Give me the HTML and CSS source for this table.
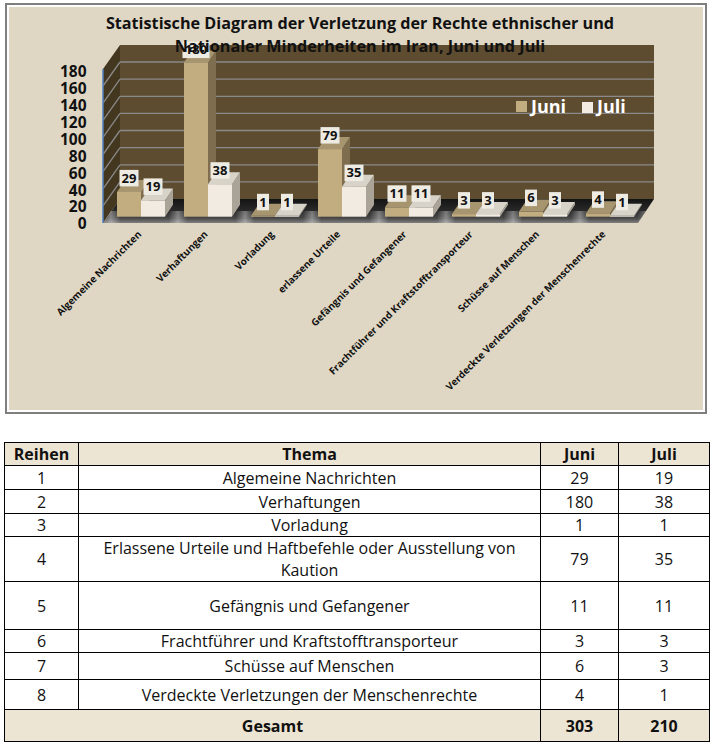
FILE: index.html
```html
<!DOCTYPE html>
<html lang="de">
<head>
<meta charset="utf-8">
<title>Statistische Diagram der Verletzung der Rechte ethnischer und Nationaler Minderheiten im Iran</title>
<link rel="stylesheet" href="styles.css">
</head>
<body>
<div class="chart-frame">
<svg class="chart" width="694" height="403" viewBox="9 7 694 403" xmlns="http://www.w3.org/2000/svg">
  <defs>
    <linearGradient id="floorShade" x1="0" y1="0" x2="0" y2="1">
      <stop offset="0" stop-color="#141414"/>
      <stop offset="0.5" stop-color="#2a2a2a"/>
      <stop offset="0.8" stop-color="#484848"/>
      <stop offset="1" stop-color="#808080"/>
    </linearGradient>
    <linearGradient id="floorGlow" gradientUnits="userSpaceOnUse" x1="144.5" y1="0" x2="211.5" y2="0" spreadMethod="repeat">
      <stop offset="0" stop-color="#ffffff" stop-opacity="0"/>
      <stop offset="0.36" stop-color="#ffffff" stop-opacity="0"/>
      <stop offset="0.5" stop-color="#ffffff" stop-opacity="0.36"/>
      <stop offset="0.64" stop-color="#ffffff" stop-opacity="0"/>
      <stop offset="1" stop-color="#ffffff" stop-opacity="0"/>
    </linearGradient>
  </defs>

  <polygon class="wall-side" points="103,69 120,45 120,199 103,223"/>
  <rect class="wall-back" x="120" y="45" width="534" height="154"/>

  <g class="grid">
    <line x1="120" y1="181.9" x2="654" y2="181.9"/>
    <line x1="120" y1="164.8" x2="654" y2="164.8"/>
    <line x1="120" y1="147.6" x2="654" y2="147.6"/>
    <line x1="120" y1="130.5" x2="654" y2="130.5"/>
    <line x1="120" y1="113.4" x2="654" y2="113.4"/>
    <line x1="120" y1="96.3" x2="654" y2="96.3"/>
    <line x1="120" y1="79.2" x2="654" y2="79.2"/>
    <line x1="120" y1="62" x2="654" y2="62"/>
    <line x1="103" y1="205.9" x2="120" y2="181.9"/>
    <line x1="103" y1="188.8" x2="120" y2="164.8"/>
    <line x1="103" y1="171.6" x2="120" y2="147.6"/>
    <line x1="103" y1="154.5" x2="120" y2="130.5"/>
    <line x1="103" y1="137.4" x2="120" y2="113.4"/>
    <line x1="103" y1="120.3" x2="120" y2="96.3"/>
    <line x1="103" y1="103.2" x2="120" y2="79.2"/>
    <line x1="103" y1="86" x2="120" y2="62"/>
  </g>

  <polygon class="floor" points="103,223 120,199 654,199 638,223"/>
  <polygon class="floor-glow" points="103,223 111,211 646,211 638,223"/>
  <line class="axis" x1="103" y1="69" x2="103" y2="223"/>

  <g class="bars">
    <polygon class="juni-side" points="141,191.9 149,179.9 149,204.7 141,216.7"/>
    <polygon class="juni-top" points="117,191.9 125,179.9 149,179.9 141,191.9"/>
    <rect class="juni-front" x="117" y="191.9" width="24" height="24.8"/>
    <polygon class="juli-side" points="165,200.4 173,188.4 173,204.7 165,216.7"/>
    <polygon class="juli-top" points="141,200.4 149,188.4 173,188.4 165,200.4"/>
    <rect class="juli-front" x="141" y="200.4" width="24" height="16.3"/>

    <polygon class="juni-side" points="208,62.6 216,50.6 216,204.7 208,216.7"/>
    <polygon class="juni-top" points="184,62.6 192,50.6 216,50.6 208,62.6"/>
    <rect class="juni-front" x="184" y="62.6" width="24" height="154.1"/>
    <polygon class="juli-side" points="232,184.2 240,172.2 240,204.7 232,216.7"/>
    <polygon class="juli-top" points="208,184.2 216,172.2 240,172.2 232,184.2"/>
    <rect class="juli-front" x="208" y="184.2" width="24" height="32.5"/>

    <polygon class="juni-side" points="275,215.8 283,203.8 283,204.7 275,216.7"/>
    <polygon class="juni-top" points="251,215.8 259,203.8 283,203.8 275,215.8"/>
    <rect class="juni-front" x="251" y="215.8" width="24" height="0.9"/>
    <polygon class="juli-side" points="299,215.8 307,203.8 307,204.7 299,216.7"/>
    <polygon class="juli-top" points="275,215.8 283,203.8 307,203.8 299,215.8"/>
    <rect class="juli-front" x="275" y="215.8" width="24" height="0.9"/>

    <polygon class="juni-side" points="342,149.1 350,137.1 350,204.7 342,216.7"/>
    <polygon class="juni-top" points="318,149.1 326,137.1 350,137.1 342,149.1"/>
    <rect class="juni-front" x="318" y="149.1" width="24" height="67.6"/>
    <polygon class="juli-side" points="366,186.7 374,174.7 374,204.7 366,216.7"/>
    <polygon class="juli-top" points="342,186.7 350,174.7 374,174.7 366,186.7"/>
    <rect class="juli-front" x="342" y="186.7" width="24" height="30"/>

    <polygon class="juni-side" points="409,207.3 417,195.3 417,204.7 409,216.7"/>
    <polygon class="juni-top" points="385,207.3 393,195.3 417,195.3 409,207.3"/>
    <rect class="juni-front" x="385" y="207.3" width="24" height="9.4"/>
    <polygon class="juli-side" points="433,207.3 441,195.3 441,204.7 433,216.7"/>
    <polygon class="juli-top" points="409,207.3 417,195.3 441,195.3 433,207.3"/>
    <rect class="juli-front" x="409" y="207.3" width="24" height="9.4"/>

    <polygon class="juni-side" points="476,214.1 484,202.1 484,204.7 476,216.7"/>
    <polygon class="juni-top" points="452,214.1 460,202.1 484,202.1 476,214.1"/>
    <rect class="juni-front" x="452" y="214.1" width="24" height="2.6"/>
    <polygon class="juli-side" points="500,214.1 508,202.1 508,204.7 500,216.7"/>
    <polygon class="juli-top" points="476,214.1 484,202.1 508,202.1 500,214.1"/>
    <rect class="juli-front" x="476" y="214.1" width="24" height="2.6"/>

    <polygon class="juni-side" points="543,211.6 551,199.6 551,204.7 543,216.7"/>
    <polygon class="juni-top" points="519,211.6 527,199.6 551,199.6 543,211.6"/>
    <rect class="juni-front" x="519" y="211.6" width="24" height="5.1"/>
    <polygon class="juli-side" points="567,214.1 575,202.1 575,204.7 567,216.7"/>
    <polygon class="juli-top" points="543,214.1 551,202.1 575,202.1 567,214.1"/>
    <rect class="juli-front" x="543" y="214.1" width="24" height="2.6"/>

    <polygon class="juni-side" points="610,213.3 618,201.3 618,204.7 610,216.7"/>
    <polygon class="juni-top" points="586,213.3 594,201.3 618,201.3 610,213.3"/>
    <rect class="juni-front" x="586" y="213.3" width="24" height="3.4"/>
    <polygon class="juli-side" points="634,215.8 642,203.8 642,204.7 634,216.7"/>
    <polygon class="juli-top" points="610,215.8 618,203.8 642,203.8 634,215.8"/>
    <rect class="juli-front" x="610" y="215.8" width="24" height="0.9"/>
  </g>

  <g class="dlabels">
    <rect x="119.5" y="169.9" width="19" height="16.5"/><text x="129" y="182.6">29</text>
    <rect x="143.5" y="178.4" width="19" height="16.5"/><text x="153" y="191.1">19</text>
    <rect x="182.5" y="41.6" width="27" height="16.5"/><text x="196" y="54.3">180</text>
    <rect x="210.5" y="162.2" width="19" height="16.5"/><text x="220" y="174.9">38</text>
    <rect x="257" y="193.8" width="12" height="16.5"/><text x="263" y="206.5">1</text>
    <rect x="281" y="193.8" width="12" height="16.5"/><text x="287" y="206.5">1</text>
    <rect x="320.5" y="127.1" width="19" height="16.5"/><text x="330" y="139.8">79</text>
    <rect x="344.5" y="164.7" width="19" height="16.5"/><text x="354" y="177.4">35</text>
    <rect x="387.5" y="185.3" width="19" height="16.5"/><text x="397" y="198">11</text>
    <rect x="411.5" y="185.3" width="19" height="16.5"/><text x="421" y="198">11</text>
    <rect x="458" y="192.1" width="12" height="16.5"/><text x="464" y="204.8">3</text>
    <rect x="482" y="192.1" width="12" height="16.5"/><text x="488" y="204.8">3</text>
    <rect x="525" y="189.6" width="12" height="16.5"/><text x="531" y="202.3">6</text>
    <rect x="549" y="192.1" width="12" height="16.5"/><text x="555" y="204.8">3</text>
    <rect x="592" y="191.3" width="12" height="16.5"/><text x="598" y="204">4</text>
    <rect x="616" y="193.8" width="12" height="16.5"/><text x="622" y="206.5">1</text>
  </g>

  <g class="yaxis">
    <text x="86.5" y="77.2">180</text>
    <text x="86.5" y="94.2">160</text>
    <text x="86.5" y="111.2">140</text>
    <text x="86.5" y="128.2">120</text>
    <text x="86.5" y="145.2">100</text>
    <text x="86.5" y="162.2">80</text>
    <text x="86.5" y="178.7">60</text>
    <text x="86.5" y="195.7">40</text>
    <text x="86.5" y="212.2">20</text>
    <text x="86.5" y="229.2">0</text>
  </g>

  <g class="xaxis">
    <text x="142" y="235" transform="rotate(-45 142 235)">Algemeine Nachrichten</text>
    <text x="208.3" y="235" transform="rotate(-45 208.3 235)">Verhaftungen</text>
    <text x="274.6" y="235" transform="rotate(-45 274.6 235)">Vorladung</text>
    <text x="340.9" y="235" transform="rotate(-45 340.9 235)">erlassene Urteile</text>
    <text x="407.2" y="235" transform="rotate(-45 407.2 235)">Gefängnis und Gefangener</text>
    <text x="473.5" y="235" transform="rotate(-45 473.5 235)">Frachtführer und Kraftstofftransporteur</text>
    <text x="539.8" y="235" transform="rotate(-45 539.8 235)">Schüsse auf Menschen</text>
    <text x="606.1" y="235" transform="rotate(-45 606.1 235)">Verdeckte Verletzungen der Menschenrechte</text>
  </g>

  <g class="legend">
    <rect class="juni-front" x="516" y="101" width="11" height="11"/>
    <text x="531" y="113">Juni</text>
    <rect class="juli-front" x="582" y="102" width="11" height="11"/>
    <text x="597" y="113">Juli</text>
  </g>

  <g class="title">
    <text x="360" y="28.5">Statistische Diagram der Verletzung der Rechte ethnischer und</text>
    <text x="360" y="51.5">Nationaler Minderheiten im Iran, Juni und Juli</text>
  </g>
</svg>
</div>

<table class="data">
  <colgroup>
    <col class="col-nr">
    <col class="col-thema">
    <col class="col-juni">
    <col class="col-juli">
  </colgroup>
  <thead>
    <tr class="row-head"><th>Reihen</th><th>Thema</th><th>Juni</th><th>Juli</th></tr>
  </thead>
  <tbody>
    <tr class="h24"><td>1</td><td>Algemeine Nachrichten</td><td>29</td><td>19</td></tr>
    <tr class="h24"><td>2</td><td>Verhaftungen</td><td>180</td><td>38</td></tr>
    <tr class="h23"><td>3</td><td>Vorladung</td><td>1</td><td>1</td></tr>
    <tr class="h45"><td>4</td><td>Erlassene Urteile und Haftbefehle oder Ausstellung von<br>Kaution</td><td>79</td><td>35</td></tr>
    <tr class="h48"><td>5</td><td>Gefängnis und Gefangener</td><td>11</td><td>11</td></tr>
    <tr class="h23"><td>6</td><td>Frachtführer und Kraftstofftransporteur</td><td>3</td><td>3</td></tr>
    <tr class="h27"><td>7</td><td>Schüsse auf Menschen</td><td>6</td><td>3</td></tr>
    <tr class="h30"><td>8</td><td>Verdeckte Verletzungen der Menschenrechte</td><td>4</td><td>1</td></tr>
  </tbody>
  <tfoot>
    <tr class="row-total"><td colspan="2">Gesamt</td><td>303</td><td>210</td></tr>
  </tfoot>
</table>
</body>
</html>
```

FILE: styles.css
```css
html, body {
  margin: 0;
  padding: 0;
  background: #ffffff;
}

body {
  font-family: "Open Sans", "Noto Sans", sans-serif;
  color: #111111;
}

.chart-frame {
  width: 702px;
  height: 411px;
  margin: 3px 0 0 5px;
  box-sizing: border-box;
  border: 2px solid #7f7f7f;
  padding: 2px;
  background: #ffffff;
}

.chart {
  display: block;
  background: #dfd7c4;
}

.wall-back { fill: #5e4c30; }
.wall-side { fill: #43371f; }

.grid line {
  stroke: #8a8a8a;
  stroke-width: 1.3;
}

.floor { fill: url(#floorShade); }
.floor-glow { fill: url(#floorGlow); }

.axis {
  stroke: #4f81bd;
  stroke-width: 1.5;
}

.juni-front { fill: #c2ad80; }
.juni-top { fill: #a7956f; }
.juni-side { fill: #7e6d4f; }
.juli-front { fill: #f1ebe1; }
.juli-top { fill: #d8d3c9; }
.juli-side { fill: #aaa498; }

.dlabels rect { fill: #eeebe3; }
.dlabels text {
  font-family: "Open Sans", sans-serif;
  font-weight: 700;
  font-size: 13px;
  fill: #111111;
  text-anchor: middle;
}

.yaxis text {
  font-family: "Open Sans", sans-serif;
  font-weight: 700;
  font-size: 15.5px;
  fill: #111111;
  text-anchor: end;
}

.xaxis text {
  font-family: "Open Sans", sans-serif;
  font-weight: 700;
  font-size: 9.8px;
  fill: #111111;
  text-anchor: end;
}

.legend text {
  font-family: "Open Sans", sans-serif;
  font-weight: 700;
  font-size: 18px;
  fill: #ffffff;
}

.title text {
  font-family: "Open Sans", sans-serif;
  font-weight: 700;
  font-size: 16.2px;
  fill: #111111;
  text-anchor: middle;
}

.data {
  margin: 28px 0 0 4px;
  width: 705px;
  border-collapse: collapse;
  table-layout: fixed;
  font-size: 16px;
  line-height: 22px;
  color: #111111;
}

.col-nr { width: 74px; }
.col-thema { width: 462px; }
.col-juni { width: 78px; }
.col-juli { width: 91px; }

.data th,
.data td {
  border: 1px solid #000000;
  padding: 0 4px;
  text-align: center;
  vertical-align: middle;
}

.data th {
  font-weight: 700;
}

.row-head,
.row-total {
  background: #ede5d4;
}

.row-head { height: 23px; }
.row-total { height: 32px; }
.row-total td { font-weight: 700; }

.h23 { height: 23px; }
.h24 { height: 24px; }
.h27 { height: 27px; }
.h30 { height: 30px; }
.h45 { height: 45px; }
.h48 { height: 48px; }
```
